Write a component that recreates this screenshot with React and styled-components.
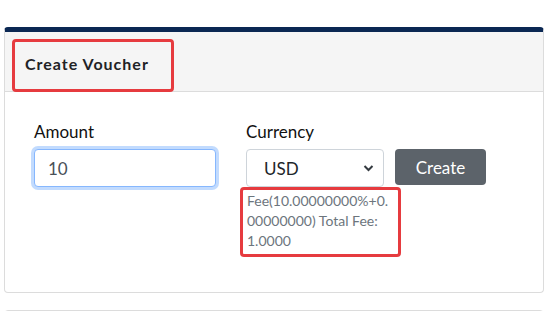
import React from 'react';
import styled, { createGlobalStyle } from 'styled-components';

const GlobalStyle = createGlobalStyle`
  body {
    margin: 0;
    background: #ffffff;
    font-family: 'Lato', 'Liberation Sans', sans-serif;
    color: #212529;
  }
`;

const Page = styled.div`
  padding: 27px 8px 0 4px;
  display: flex;
  flex-direction: column;
  gap: 17px;
`;

const Card = styled.div`
  box-sizing: border-box;
  border: 1px solid #dcdcdc;
  border-top: ${p => (p.$accent ? '5px solid #0b2853' : '1px solid #dcdcdc')};
  border-radius: 4px;
  background: #fff;
  min-height: ${p => p.$min || 0}px;
`;

const CardHeader = styled.div`
  height: 59px;
  background: #f5f5f5;
  border-bottom: 1px solid #dcdcdc;
  display: flex;
  align-items: flex-end;
  padding-left: 7px;
`;

const Marked = styled.div`
  border: 3px solid #e63b3f;
  border-radius: 4px;
  box-sizing: border-box;
`;

const TitleBox = styled(Marked)`
  width: 162px;
  height: 53px;
  margin-bottom: -1px;
  display: flex;
  align-items: center;
  padding-left: 10px;
  padding-bottom: 5px;
`;

const Title = styled.h5`
  margin: 0;
  font-size: 16px;
  font-weight: 700;
  letter-spacing: 1px;
  color: #1f2326;
`;

const CardBody = styled.div`
  padding: 29px 0 0 29px;
  display: grid;
  grid-template-columns: 182px 138px 91px;
  column-gap: 30px;
  align-items: start;
`;

const Field = styled.div`
  display: flex;
  flex-direction: column;
`;

const Label = styled.label`
  font-size: 17px;
  line-height: 21px;
  margin-bottom: 7px;
  color: #111;
`;

const Input = styled.input`
  box-sizing: border-box;
  height: 38px;
  width: 100%;
  border: 1px solid #86b7fe;
  border-radius: 4px;
  box-shadow: 0 0 0 3px rgba(13, 110, 253, 0.25);
  padding: 0 13px;
  font-family: inherit;
  font-size: 17px;
  color: #495057;
  outline: none;
`;

const SelectBox = styled.div`
  box-sizing: border-box;
  height: 38px;
  border: 1px solid #ced4da;
  border-radius: 4px;
  display: flex;
  align-items: center;
  justify-content: space-between;
  padding: 0 9px 0 17px;
  font-size: 17px;
  color: #212529;
`;

const Fee = styled(Marked)`
  width: 161px;
  margin: 0 0 0 -6px;
  padding: 1px 8px 3px 4px;
  font-size: 14px;
  line-height: 20px;
  color: #6c757d;
  overflow-wrap: anywhere;
`;

const Button = styled.button`
  margin-top: 28px;
  margin-left: -19px;
  height: 36px;
  width: 91px;
  border: none;
  border-radius: 4px;
  background: #5c636a;
  color: #fff;
  font-family: inherit;
  font-size: 17px;
`;

function App() {
  return (
    <>
      <GlobalStyle />
      <Page>
        <Card $accent $min={266}>
          <CardHeader>
            <TitleBox>
              <Title>Create Voucher</Title>
            </TitleBox>
          </CardHeader>
          <CardBody>
            <Field>
              <Label>Amount</Label>
              <Input defaultValue="10" />
            </Field>
            <Field>
              <Label>Currency</Label>
              <SelectBox>
                USD
                <svg width="11" height="8" viewBox="0 0 11 8">
                  <path d="M1.5 2l4 4 4-4" fill="none" stroke="#343a40" strokeWidth="2" />
                </svg>
              </SelectBox>
              <Fee>Fee(10.00000000%+0.00000000) Total Fee: 1.0000</Fee>
            </Field>
            <Button>Create</Button>
          </CardBody>
        </Card>
        <Card $min={40} />
      </Page>
    </>
  );
}

export default App;
